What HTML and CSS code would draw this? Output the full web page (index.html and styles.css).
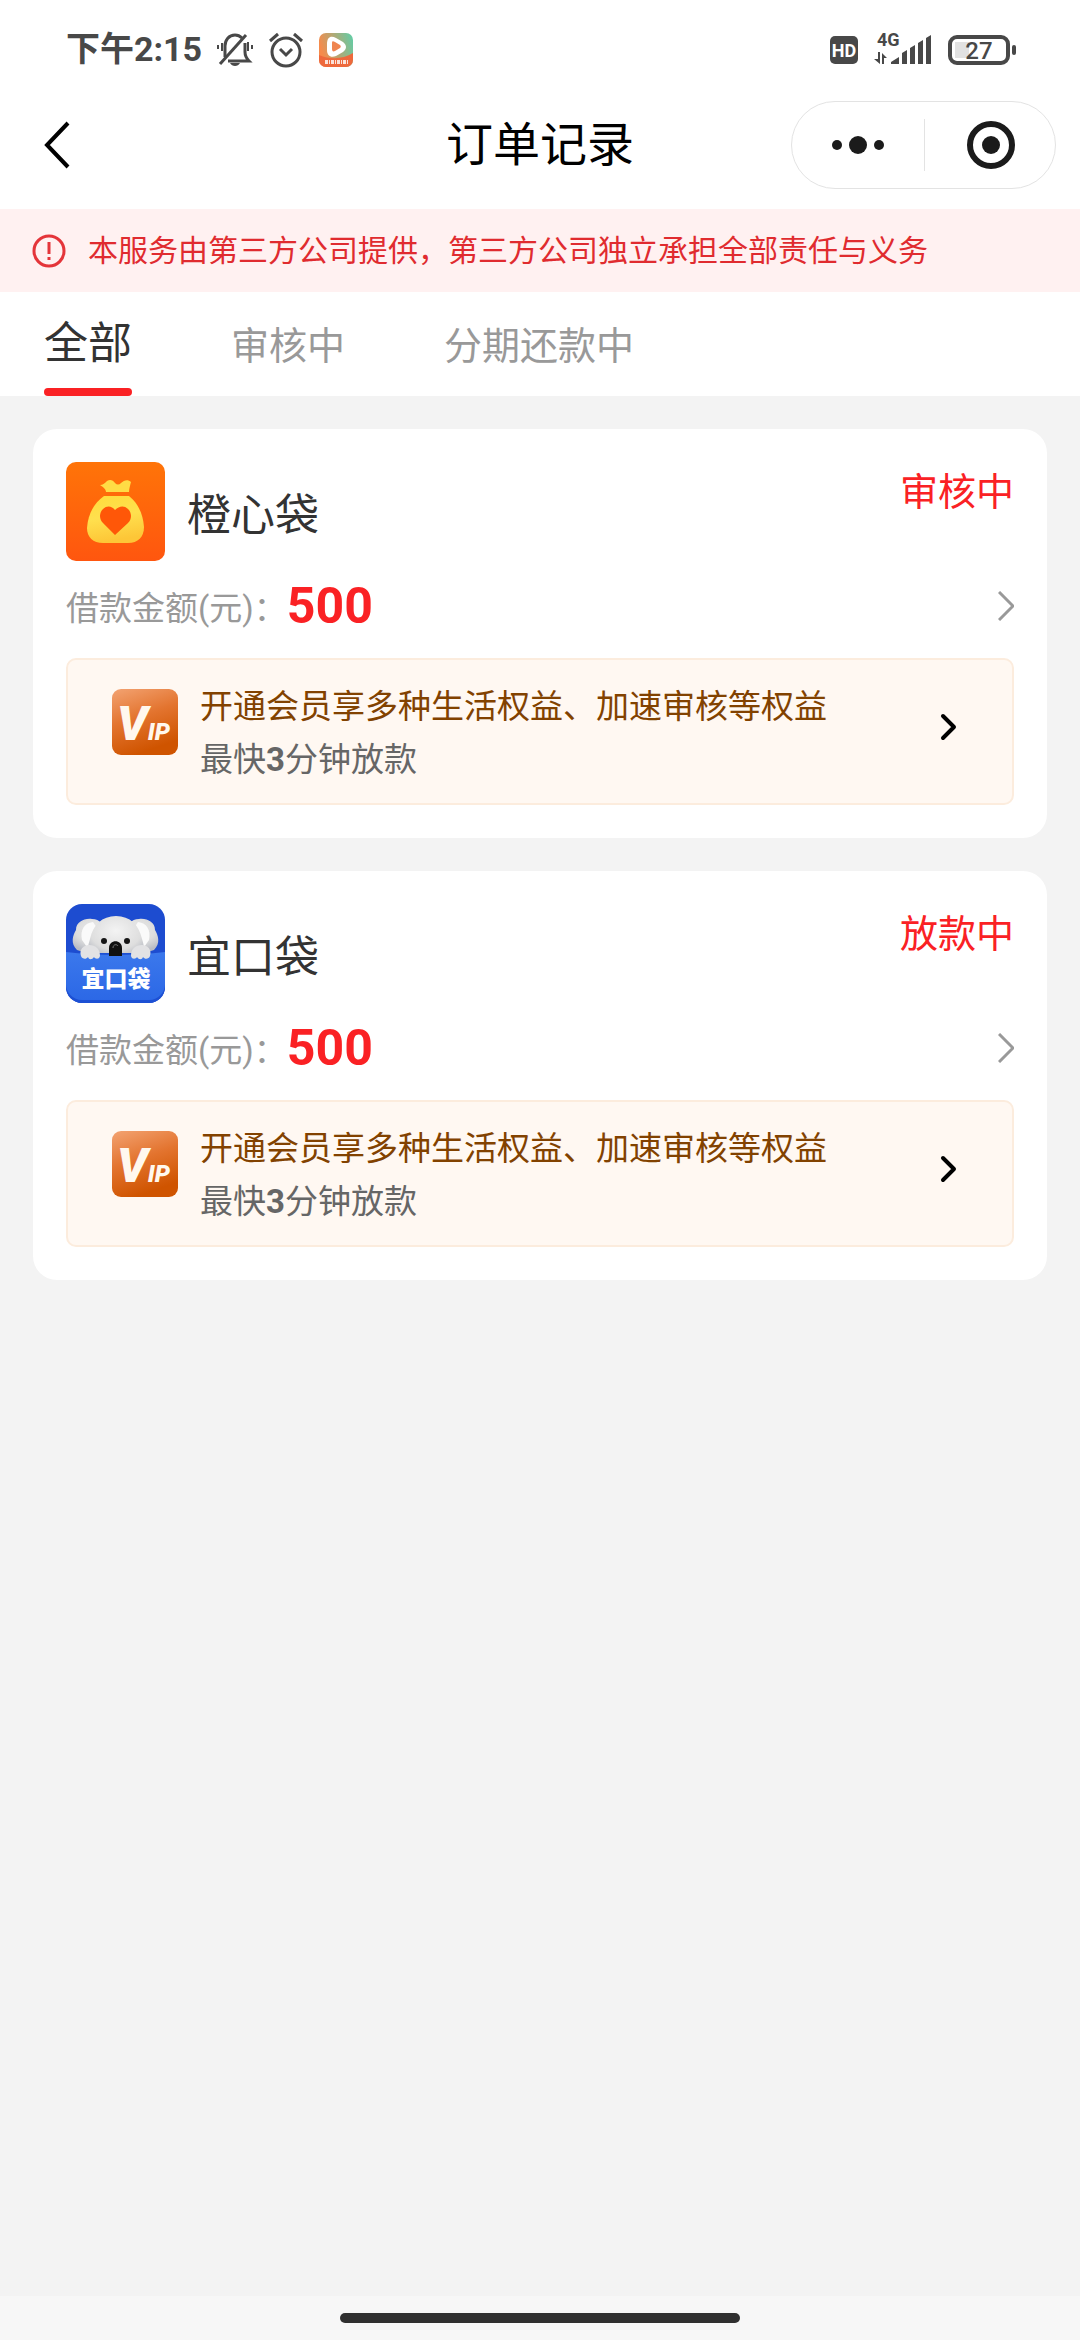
FILE: index.html
```html
<!doctype html>
<html lang="zh-CN">
  <head>
    <meta charset="UTF-8" />
    <meta name="viewport" content="width=device-width, initial-scale=1.0" />
    <title>订单记录</title>
    <link rel="stylesheet" href="styles.css">
  </head>
  <body>
    <header class="header">
      <div class="status-bar">
        <div class="status-left">
          <span class="clock">下午2:15</span>
          <svg width="36" height="34" viewBox="0 0 36 34" fill="none" stroke="#484848" stroke-width="3">
            <path d="M8 24V13c0-6 4-11 10-11 3 0 5 1 7 3M28 10v9c0 3 1 6 4 9H11" />
            <path d="M3 31L29 2" />
            <path d="M5 10v8M1 12v4M31 9v9M35 12v4" stroke-width="2" />
            <path d="M13 30h10c-2 4-8 4-10 0z" fill="#484848" stroke="none" />
          </svg>
          <svg width="36" height="36" viewBox="0 0 36 36" fill="none" stroke="#484848" stroke-width="3">
            <circle cx="18" cy="20" r="14" />
            <path d="M12 17l6 6 6-6M2 9l8-7M34 9l-8-7" />
          </svg>
          <svg width="34" height="34" viewBox="0 0 34 34">
            <defs>
              <linearGradient id="video-bg" x1="0" y1="0.3" x2="1" y2="0">
                <stop offset="0" stop-color="#f68a4b" />
                <stop offset="1" stop-color="#5dcfa9" />
              </linearGradient>
            </defs>
            <rect width="34" height="34" rx="7" fill="url(#video-bg)" />
            <path d="M0 22c12 5 24 4 34-2v7a7 7 0 0 1-7 7H7a7 7 0 0 1-7-7z" fill="#ee693c" />
            <path d="M8 11c0-7 4-9 9-6l7 4c4 3 4 7 0 10l-7 4c-5 2-9 0-9-6z" fill="#fff" />
            <path d="M13 10c0-2 1-2 3-1l5 3c1 1 1 2 0 3l-5 3c-2 1-3 0-3-2z" fill="#ef8550" />
            <path d="M6 29h24" stroke="#fff" stroke-width="4" stroke-dasharray="3 1 1 1" opacity="0.8" />
          </svg>
        </div>
        <div class="status-right">
          <span class="hd">HD</span>
          <div class="signal">
            <span class="network">4G</span>
            <svg width="58" height="30" viewBox="0 0 58 30" fill="#484848">
              <path d="M4 17h2v12L0 24h4zM8 18l5 5H10v6H8z" />
              <path d="M17 29v-2l8-5v7zM28 29V18l5-3v14zM36 29V13l5-3v19zM44 29V8l5-3v24zM52 29V3l5-3v29z" />
            </svg>
          </div>
          <div class="battery"><span>27</span></div>
        </div>
      </div>

      <div class="nav-bar">
        <button class="back" type="button" aria-label="返回">
          <svg width="26" height="48" viewBox="0 0 26 48" fill="none" stroke="#000" stroke-width="4">
            <path d="M24 2L3 24l21 22" />
          </svg>
        </button>
        <h1>订单记录</h1>
        <div class="capsule">
          <button type="button" aria-label="更多">
            <svg width="52" height="18" viewBox="0 0 52 18" fill="#1b1b1b">
              <circle cx="5" cy="9" r="5" />
              <circle cx="26" cy="9" r="9" />
              <circle cx="47" cy="9" r="5" />
            </svg>
          </button>
          <button class="close" type="button" aria-label="关闭">
            <svg width="50" height="50" viewBox="0 0 50 50">
              <circle cx="25" cy="25" r="21" fill="none" stroke="#1b1b1b" stroke-width="6" />
              <circle cx="25" cy="25" r="9" fill="#1b1b1b" />
            </svg>
          </button>
        </div>
      </div>
    </header>

    <div class="notice">
      <svg width="34" height="34" viewBox="0 0 34 34" fill="none" stroke="#e4353a" stroke-width="3">
        <circle cx="17" cy="17" r="15" />
        <path d="M17 8v12M17 23v3" />
      </svg>
      <p>本服务由第三方公司提供，第三方公司独立承担全部责任与义务</p>
    </div>

    <nav class="tabs">
      <button class="tab active" type="button">全部</button>
      <button class="tab" type="button">审核中</button>
      <button class="tab" type="button">分期还款中</button>
    </nav>

    <main class="orders">
      <article class="order">
        <div class="order-head">
          <svg class="logo" viewBox="0 0 99 99">
            <defs>
              <linearGradient id="orange-bg" x1="0" y1="0" x2="0" y2="1">
                <stop offset="0" stop-color="#ff7408" />
                <stop offset="1" stop-color="#ff560f" />
              </linearGradient>
              <linearGradient id="bag" x1="0" y1="0" x2="0.2" y2="1">
                <stop offset="0" stop-color="#ffdc3c" />
                <stop offset="0.5" stop-color="#ffe04e" />
                <stop offset="1" stop-color="#fdc637" />
              </linearGradient>
            </defs>
            <rect width="99" height="99" rx="10" fill="url(#orange-bg)" />
            <path d="M34 23c3 0 5-2 7-4 3-2 6-1 8 2 2 2 4 2 6 0 3-3 7-4 10-1-1 4-2 7-2 10H40c0-3-3-5-6-7z" fill="#ffdc45" />
            <path d="M38 34h25c9 7 14 18 15 31 0 10-6 16-16 16H37c-10 0-16-6-16-15 1-14 7-25 17-32z" fill="url(#bag)" />
            <path d="M49 73L37 61c-4-4-4-10 0-14s9-3 12 1c4-4 9-5 13-1s4 10 0 14z" fill="#ff5708" />
          </svg>
          <h2>橙心袋</h2>
          <span class="state">审核中</span>
        </div>
        <a class="amount" href="#">
          <span>借款金额(元)：</span>
          <strong>500</strong>
          <svg width="16" height="30" viewBox="0 0 16 30">
            <path d="M1 1l14 14L1 29" fill="none" stroke="#999" stroke-width="3" />
          </svg>
        </a>
        <a class="vip" href="#">
          <svg class="vip-icon" viewBox="0 0 66 66">
            <defs>
              <linearGradient id="vip-bg" x1="0" y1="0" x2="0.35" y2="1">
                <stop offset="0" stop-color="#f3a372" />
                <stop offset="0.5" stop-color="#e3742f" />
                <stop offset="1" stop-color="#cf5400" />
              </linearGradient>
            </defs>
            <rect width="66" height="66" rx="9" fill="url(#vip-bg)" />
            <text class="vip-mark" x="5" y="51">V<tspan class="vip-mark-small">IP</tspan></text>
          </svg>
          <div class="vip-text">
            <p>开通会员享多种生活权益、加速审核等权益</p>
            <p class="vip-sub">最快<b>3</b>分钟放款</p>
          </div>
          <svg class="vip-arrow" width="18" height="28" viewBox="0 0 18 28">
            <path d="M3 3l11 11L3 25" fill="none" stroke="#000" stroke-width="4" stroke-linecap="round" stroke-linejoin="round" />
          </svg>
        </a>
      </article>

      <article class="order">
        <div class="order-head">
          <svg class="logo" viewBox="0 0 99 99">
            <defs>
              <linearGradient id="pocket" x1="0" y1="0" x2="0" y2="1">
                <stop offset="0" stop-color="#3b78ec" />
                <stop offset="1" stop-color="#2c68e6" />
              </linearGradient>
              <radialGradient id="fur" cx="0.5" cy="0.35" r="0.65">
                <stop offset="0" stop-color="#f3f3f3" />
                <stop offset="0.7" stop-color="#dedede" />
                <stop offset="1" stop-color="#b9bcc4" />
              </radialGradient>
            </defs>
            <rect width="99" height="99" rx="16" fill="#1d4cd0" />
            <path d="M11 46C4 39 7 31 10 26c0-8 8-12 16-11 8 0 12 6 12 12L24 50zM88 46c7-7 4-15 1-20 0-8-8-12-16-11-8 0-12 6-12 12l14 23z" fill="url(#fur)" />
            <path d="M16 36c-2-10 2-17 11-18l4 6-8 22zM83 36c2-10-2-17-11-18l-4 6 8 22z" fill="#fafafa" />
            <path d="M22 54c-1-7 0-13 2-19 3-14 12-23 26-23s23 9 26 23c2 6 3 12 1 19z" fill="url(#fur)" />
            <circle cx="38" cy="37" r="3" fill="#151515" />
            <circle cx="61" cy="37" r="3" fill="#151515" />
            <path d="M0 49h99v34a16 16 0 0 1-16 16H16A16 16 0 0 1 0 83z" fill="#1d50d4" />
            <path d="M0 48c30 4 69 4 99 0v32a16 16 0 0 1-16 16H16A16 16 0 0 1 0 80z" fill="url(#pocket)" />
            <path d="M43 52v-8c0-9 13-9 13 0v8z" fill="#111" />
            <path d="M47 44c0-4 4-4 5-2" fill="none" stroke="#777" stroke-width="1" />
            <path d="M15 52c-2-6 2-11 8-11 7 0 11 4 11 11-1 4-5 3-6 1-2 3-5 3-6 0-2 3-6 2-7-1zM65 52c0-7 4-11 11-11 6 0 10 5 8 11-1 3-5 4-7 1-1 3-4 3-6 0-1 2-5 3-6-1z" fill="#e2e2e4" />
            <text class="koala-name" x="50" y="83" text-anchor="middle">宜口袋</text>
          </svg>
          <h2>宜口袋</h2>
          <span class="state">放款中</span>
        </div>
        <a class="amount" href="#">
          <span>借款金额(元)：</span>
          <strong>500</strong>
          <svg width="16" height="30" viewBox="0 0 16 30">
            <path d="M1 1l14 14L1 29" fill="none" stroke="#999" stroke-width="3" />
          </svg>
        </a>
        <a class="vip" href="#">
          <svg class="vip-icon" viewBox="0 0 66 66">
            <rect width="66" height="66" rx="9" fill="url(#vip-bg)" />
            <text class="vip-mark" x="5" y="51">V<tspan class="vip-mark-small">IP</tspan></text>
          </svg>
          <div class="vip-text">
            <p>开通会员享多种生活权益、加速审核等权益</p>
            <p class="vip-sub">最快<b>3</b>分钟放款</p>
          </div>
          <svg class="vip-arrow" width="18" height="28" viewBox="0 0 18 28">
            <path d="M3 3l11 11L3 25" fill="none" stroke="#000" stroke-width="4" stroke-linecap="round" stroke-linejoin="round" />
          </svg>
        </a>
      </article>
    </main>

    <footer class="home-bar"><span></span></footer>
  </body>
</html>
```
FILE: styles.css
```css
:root {
  --red: #fa2124;
  --text: #333;
  --muted: #999;
  --page-bg: #f3f3f3;
}

* {
  box-sizing: border-box;
  margin: 0;
  padding: 0;
}

body {
  display: flex;
  flex-direction: column;
  min-height: 100vh;
  font-family: Roboto, "Noto Sans CJK SC", sans-serif;
  color: var(--text);
  background: var(--page-bg);
}

button {
  font: inherit;
  border: none;
  background: none;
  cursor: pointer;
}

a {
  color: inherit;
  text-decoration: none;
}

svg {
  display: block;
  flex: none;
}

.header {
  background: #fff;
}

/* status bar */
.status-bar {
  display: flex;
  justify-content: space-between;
  align-items: center;
  height: 100px;
  padding: 0 64px 0 66px;
  color: #484848;
}

.status-left,
.status-right {
  display: flex;
  align-items: center;
}

.status-left {
  gap: 15px;
}

.clock {
  padding-bottom: 2px;
  font-size: 34px;
  font-weight: 700;
  line-height: 40px;
}

.status-right {
  gap: 16px;
}

.hd {
  width: 28px;
  height: 28px;
  border-radius: 5px;
  background: #484848;
  color: #fff;
  font-size: 18px;
  font-weight: 700;
  line-height: 30px;
  text-align: center;
}

.signal {
  position: relative;
}

.network {
  position: absolute;
  top: -3px;
  left: 3px;
  font-size: 18px;
  font-weight: 700;
  line-height: 16px;
}

.battery {
  position: relative;
  width: 62px;
  height: 30px;
  margin-right: 6px;
  border: 4px solid #484848;
  border-radius: 9px;
  background: linear-gradient(#e2e2e2, #e2e2e2) 3px 3px / 14px 16px no-repeat;
  font-size: 24px;
  font-weight: 500;
  line-height: 24px;
  text-align: center;
}

.battery::after {
  content: "";
  position: absolute;
  top: 6px;
  right: -10px;
  width: 4px;
  height: 10px;
  border-radius: 2px;
  background: #484848;
}

/* title bar */
.nav-bar {
  display: grid;
  grid-template-columns: 1fr auto 1fr;
  align-items: center;
  height: 109px;
  padding: 0 24px 20px;
}

.back {
  justify-self: start;
  padding: 0 20px;
}

h1 {
  color: #000;
  font-size: 47px;
  font-weight: 400;
  line-height: 60px;
}

.capsule {
  display: grid;
  grid-template-columns: 1fr 1fr;
  justify-self: end;
  width: 265px;
  height: 88px;
  border: 1px solid #e3e3e3;
  border-radius: 44px;
}

.capsule button {
  display: flex;
  align-items: center;
  justify-content: center;
}

.capsule .close {
  padding-left: 4px;
  background: linear-gradient(#e3e3e3, #e3e3e3) left center / 1px 52px no-repeat;
}

/* notice */
.notice {
  display: flex;
  align-items: center;
  gap: 22px;
  padding: 20px 32px;
  background: #fff1f1;
  color: #e02b2f;
  font-size: 30px;
  line-height: 43px;
}

/* tabs */
.tabs {
  display: flex;
  gap: 99px;
  height: 104px;
  padding: 0 44px;
  background: #fff;
}

.tab {
  position: relative;
  padding-bottom: 4px;
  color: var(--muted);
  font-size: 38px;
}

.tab.active {
  padding-bottom: 8px;
  color: var(--text);
  font-size: 44px;
}

.tab.active::after {
  content: "";
  position: absolute;
  right: 0;
  bottom: 0;
  left: 0;
  height: 8px;
  border-radius: 4px;
  background: var(--red);
}

/* orders */
.orders {
  display: flex;
  flex: 1;
  flex-direction: column;
  gap: 33px;
  padding: 33px;
}

.order {
  padding: 33px;
  border-radius: 24px;
  background: #fff;
}

.order-head {
  display: flex;
  align-items: center;
}

.logo {
  width: 99px;
  height: 99px;
  margin-right: 22px;
}

.koala-name {
  fill: #fff;
  font-size: 23px;
  font-weight: 900;
}

h2 {
  flex: 1;
  padding-top: 8px;
  font-size: 44px;
  font-weight: 400;
  line-height: 56px;
}

.state {
  align-self: flex-start;
  color: var(--red);
  font-size: 38px;
  line-height: 60px;
}

.amount {
  display: flex;
  align-items: center;
  height: 90px;
  margin-bottom: 7px;
  color: var(--muted);
  font-size: 33px;
}

.amount strong {
  flex: 1;
  color: var(--red);
  font-size: 50px;
}

.vip {
  display: flex;
  align-items: center;
  height: 147px;
  padding: 0 54px 0 44px;
  border: 2px solid #fcecdd;
  border-radius: 10px;
  background: #fff8f2;
}

.vip-icon {
  align-self: flex-start;
  width: 66px;
  height: 66px;
  margin: 29px 22px 0 0;
}

.vip-mark {
  fill: #fff8ee;
  font-size: 48px;
  font-style: italic;
  font-weight: 900;
}

.vip-mark-small {
  font-size: 24px;
}

.vip-text {
  flex: 1;
  padding-top: 2px;
  color: #824200;
  font-size: 33px;
  line-height: 53px;
}

.vip-sub {
  color: #666;
}

.vip-arrow {
  margin-bottom: 10px;
}

/* gesture bar */
.home-bar {
  height: 44px;
  padding-top: 17px;
  background: #f7f7f7;
}

.home-bar span {
  display: block;
  width: 37%;
  height: 10px;
  margin: 0 auto;
  border-radius: 5px;
  background: #303030;
}
```
